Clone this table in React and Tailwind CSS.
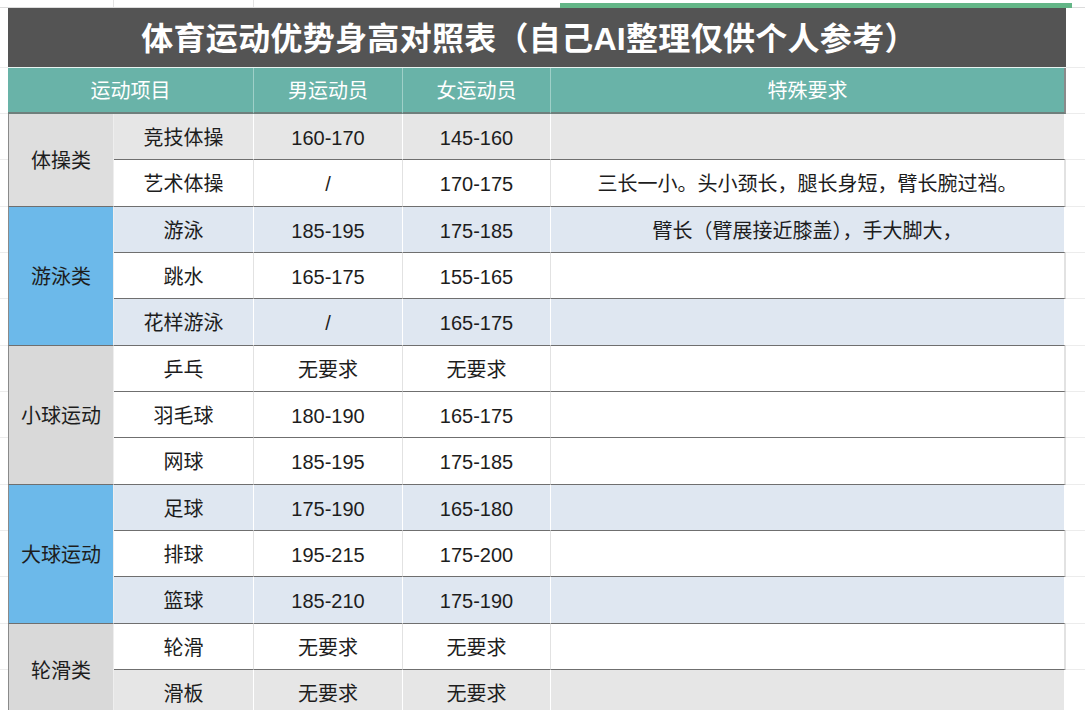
import React from "react";

const FONT = { fontFamily: '"Liberation Sans", "Noto Sans CJK SC", sans-serif' };

const groups = [
  {
    name: "体操类",
    cat: "bg-[#dedede]",
    rows: [
      ["竞技体操", "160-170", "145-160", "", "gray"],
      ["艺术体操", "/", "170-175", "三长一小。头小颈长，腿长身短，臂长腕过裆。", "white"],
    ],
  },
  {
    name: "游泳类",
    cat: "bg-[#6cb9ea]",
    rows: [
      ["游泳", "185-195", "175-185", "臂长（臂展接近膝盖），手大脚大，", "blue"],
      ["跳水", "165-175", "155-165", "", "white"],
      ["花样游泳", "/", "165-175", "", "blue"],
    ],
  },
  {
    name: "小球运动",
    cat: "bg-[#d9d9d9]",
    rows: [
      ["乒乓", "无要求", "无要求", "", "white"],
      ["羽毛球", "180-190", "165-175", "", "white"],
      ["网球", "185-195", "175-185", "", "white"],
    ],
  },
  {
    name: "大球运动",
    cat: "bg-[#6cb9ea]",
    rows: [
      ["足球", "175-190", "165-180", "", "blue"],
      ["排球", "195-215", "175-200", "", "white"],
      ["篮球", "185-210", "175-190", "", "blue"],
    ],
  },
  {
    name: "轮滑类",
    cat: "bg-[#d9d9d9]",
    rows: [
      ["轮滑", "无要求", "无要求", "", "white"],
      ["滑板", "无要求", "无要求", "", "gray"],
    ],
  },
];

const rowBg = {
  gray: "bg-[#e6e6e6] border-r-white",
  white: "bg-white border-r-[#e2e2e2]",
  blue: "bg-[#dfe7f1] border-r-white",
};

export default function App() {
  const cells = [];
  let rowIndex = 4;
  groups.forEach((g, gi) => {
    const start = rowIndex;
    const n = g.rows.length;
    cells.push(
      <div
        key={`cat-${gi}`}
        className={`${g.cat} col-start-2 border-l border-l-[#8a8a8a] border-r border-r-[#eeeeee] border-b border-b-[#6f6f6f] flex items-center justify-center pt-[3px] text-[20px] text-[#1d1d1d]`}
        style={{ gridRow: `${start} / span ${n}` }}
      >
        {g.name}
      </div>
    );
    g.rows.forEach((r, ri) => {
      const row = start + ri;
      const bg = rowBg[r[4]];
      const base = `${bg} border-b border-b-[#6f6f6f] flex items-center justify-center pt-[3px] text-[20px] text-[#1d1d1d]`;
      cells.push(
        <div key={`ml-${gi}-${ri}`} className="col-start-1 border-b border-b-[#ececec] bg-white" style={{ gridRow: row }} />,
        <div key={`a-${gi}-${ri}`} className={`col-start-3 border-r ${base}`} style={{ gridRow: row }}>{r[0]}</div>,
        <div key={`b-${gi}-${ri}`} className={`col-start-4 border-r ${base}`} style={{ gridRow: row }}>{r[1]}</div>,
        <div key={`c-${gi}-${ri}`} className={`col-start-5 border-r ${base}`} style={{ gridRow: row }}>{r[2]}</div>,
        <div key={`d-${gi}-${ri}`} className={`col-start-6 ${base} border-r-2 border-r-[#8a8a8a]`} style={{ gridRow: row }}>{r[3]}</div>,
        <div key={`mr-${gi}-${ri}`} className="col-start-7 border-b border-b-[#ececec] bg-white" style={{ gridRow: row }} />
      );
    });
    rowIndex += n;
  });

  return (
    <div className="w-[1085px] h-[710px] overflow-hidden bg-white" style={FONT}>
      <div className="grid grid-cols-[8px_106px_140px_149px_148px_515px_1fr] grid-rows-[8px_60px_46px_repeat(13,46.33px)]">
        {/* top strip */}
        <div className="col-span-7 row-start-1 border-b border-b-[#dcdcdc] flex">
          <div className="w-[114px] border-r border-r-[#e4e4e4]" />
          <div className="w-[140px] border-r border-r-[#e4e4e4]" />
          <div className="w-[306px]" />
          <div className="w-[512px] h-[6px] mt-[3px] bg-[#63b687]" />
        </div>

        {/* title */}
        <div className="col-start-1 row-start-2 bg-white border-b border-b-[#ececec]" />
        <div className="col-start-2 col-span-5 row-start-2 bg-[#545454] border-b border-b-[#e8f3f1] flex items-center justify-center pr-[16px] pt-[3px] text-white text-[32px] font-bold tracking-[0.3px]">
          体育运动优势身高对照表（自己AI整理仅供个人参考）
        </div>
        <div className="col-start-7 row-start-2 bg-white border-b border-b-[#ececec]" />

        {/* header */}
        <div className="col-start-1 row-start-3 bg-white border-b border-b-[#ececec]" />
        <div className="col-start-2 col-span-2 row-start-3 bg-[#69b3a8] border-b-2 border-b-[#6f7f7c] border-r border-r-[#9fd0c8] flex items-center justify-center pt-[2px] text-white text-[20px]">
          运动项目
        </div>
        <div className="col-start-4 row-start-3 bg-[#69b3a8] border-b-2 border-b-[#6f7f7c] border-r border-r-[#9fd0c8] flex items-center justify-center pt-[2px] text-white text-[20px]">
          男运动员
        </div>
        <div className="col-start-5 row-start-3 bg-[#69b3a8] border-b-2 border-b-[#6f7f7c] border-r border-r-[#9fd0c8] flex items-center justify-center pt-[2px] text-white text-[20px]">
          女运动员
        </div>
        <div className="col-start-6 row-start-3 bg-[#69b3a8] border-b-2 border-b-[#6f7f7c] border-r-2 border-r-[#8a8a8a] flex items-center justify-center pt-[2px] text-white text-[20px]">
          特殊要求
        </div>
        <div className="col-start-7 row-start-3 bg-white border-b border-b-[#ececec]" />

        {cells}
      </div>
    </div>
  );
}
